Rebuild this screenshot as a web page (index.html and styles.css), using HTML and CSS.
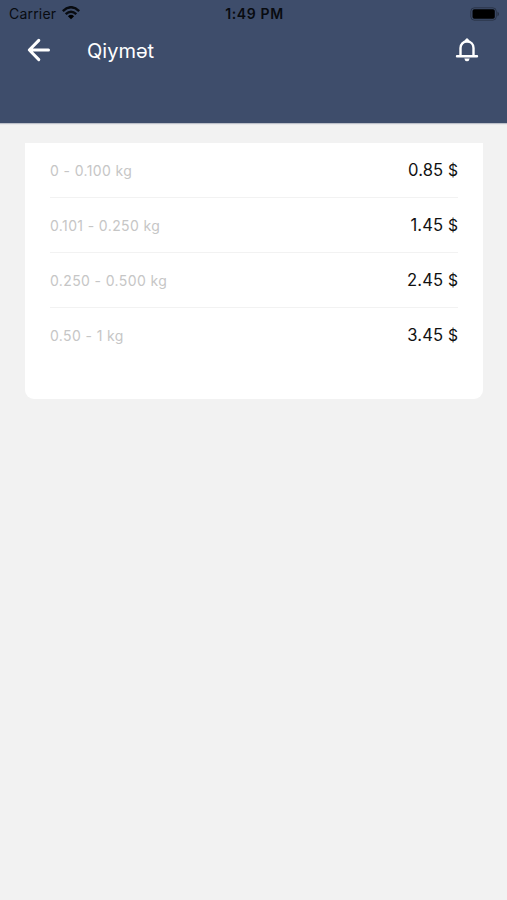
FILE: index.html
```html
<!DOCTYPE html>
<html lang="az">
<head>
<meta charset="utf-8">
<title>Qiymət</title>
<link rel="stylesheet" href="styles.css">
</head>
<body>
<header class="header">
  <div class="status">
    <div class="carrier"><span>Carrier</span>
      <svg class="wifi" viewBox="0 0 18 14"><path d="M.8 5.100Q9-2.600 17.200 5.100M3.700 8.100Q9 3.400 14.300 8.100" fill="none" stroke="#080b10" stroke-width="2.500"/><path d="M5.900 10.200Q9 7.500 12.100 10.200L9 13.300Z"/></svg>
    </div>
    <span class="time">1:49 PM</span>
    <svg class="battery" viewBox="0 0 30 14"><rect x=".8" y=".8" width="25.500" height="12.400" rx="3.600" fill="none" stroke="#000" stroke-opacity=".32"/><rect x="2.500" y="2.300" width="22.300" height="9.400" rx="1.800"/><path d="M27.500 4.500q3 2.500 0 5z" fill-opacity=".4"/></svg>
  </div>
  <nav class="bar">
    <svg class="back" viewBox="0 0 24 24"><path d="M21.500 12H2.500M11.800 2.400L2.300 12L11.800 21.600" fill="none" stroke="#fff" stroke-width="3" stroke-linecap="round" stroke-linejoin="round"/></svg>
    <h1 class="title">Qiymət</h1>
    <svg class="bell" viewBox="0 0 24 24"><path d="M5.500 18.200V10C5.500 6.200 8.200 3.500 12 3.500S18.500 6.200 18.500 10v8.200M2 18.300H22" fill="none" stroke="#fff" stroke-width="2.400" stroke-linecap="round"/><path d="M8.500 4L10.800.900q1.200-1.300 2.400 0L15.500 4zM9.300 20.600h5.400q-.5 2.700-2.700 2.700t-2.700-2.700z" fill="#fff"/></svg>
  </nav>
</header>
<main class="card">
  <div class="row"><span class="weight">0 - 0.100 kg</span><span class="price">0.85 <span class="currency">$</span></span></div>
  <div class="row"><span class="weight">0.101 - 0.250 kg</span><span class="price">1.45 <span class="currency">$</span></span></div>
  <div class="row"><span class="weight">0.250 - 0.500 kg</span><span class="price">2.45 <span class="currency">$</span></span></div>
  <div class="row"><span class="weight">0.50 - 1 kg</span><span class="price">3.45 <span class="currency">$</span></span></div>
</main>
</body>
</html>
```

FILE: styles.css
```css
* { box-sizing: border-box; }
body { margin: 0; min-height: 900px; background: #f2f2f2; font-family: Inter, "Liberation Sans", sans-serif; color: #000; }
.header { height: 123px; background: #3e4d6b; box-shadow: 0 1px 1px rgba(62,77,107,.3); }
.status { height: 27px; display: grid; grid-template-columns: 1fr auto 1fr; align-items: center; padding: 0 7px 0 9px; font-size: 14px; }
.carrier { display: flex; align-items: center; gap: 6px; color: #080b10; letter-spacing: .2px; }
.wifi { width: 18px; height: 14px; margin-top: -1px; }
.time { font-weight: 600; letter-spacing: .65px; color: #080b10; }
.battery { width: 30px; height: 14px; justify-self: end; }
.bar { height: 46px; display: flex; align-items: center; padding: 0 28px 0 27px; }
.back { width: 24px; height: 24px; }
.title { flex: 1; margin: 1px 0 0 36px; color: #fff; font-size: 20px; font-weight: 400; }
.bell { width: 24px; height: 24px; }
.card { height: 256px; margin: 20px 24px 0 25px; padding: 0 25px; background: #fff; border-radius: 0 0 9px 9px; }
.row { height: 55px; display: flex; align-items: center; justify-content: space-between; border-bottom: 1px solid #f2f2f2; }
.row:last-child { border-color: transparent; }
.weight { font-size: 14px; letter-spacing: .38px; color: #c6c6c6; }
.price { font-size: 16.600px; letter-spacing: .1px; color: #111; }
.currency { font-size: 15.600px; letter-spacing: 0; }
```
